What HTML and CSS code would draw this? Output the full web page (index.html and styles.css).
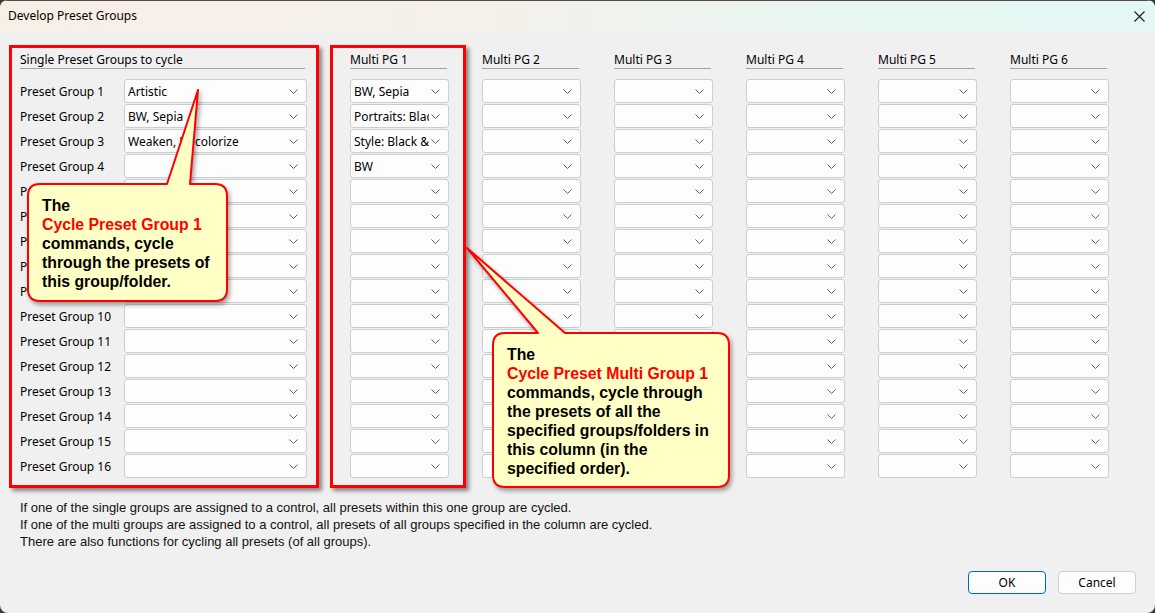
FILE: index.html
```html
<!DOCTYPE html>
<html>
<head>
<meta charset="utf-8">
<link rel="stylesheet" href="styles.css">
</head>
<body>
<div class="window">
  <div class="titlebar">
    <span class="title">Develop Preset Groups</span>
    <svg class="close" width="11" height="11" viewBox="0 0 11 11"><path d="M0.5 0.5 L10.5 10.5 M10.5 0.5 L0.5 10.5" stroke="#1a1a1a" stroke-width="1.1" fill="none"/></svg>
  </div>
  <div class="content">
    <div class="columns">
      <section class="single">
        <div class="hdr">Single Preset Groups to cycle</div>
        <div class="rows">
          <div class="row"><span class="lbl">Preset Group 1</span><div class="combo"><span class="val">Artistic</span><svg class="chev" width="9" height="5" viewBox="0 0 9 5"><path d="M0.5 0.5 L4.5 4.5 L8.5 0.5"/></svg></div></div>
          <div class="row"><span class="lbl">Preset Group 2</span><div class="combo"><span class="val">BW, Sepia</span><svg class="chev" width="9" height="5" viewBox="0 0 9 5"><path d="M0.5 0.5 L4.5 4.5 L8.5 0.5"/></svg></div></div>
          <div class="row"><span class="lbl">Preset Group 3</span><div class="combo"><span class="val">Weaken, Decolorize</span><svg class="chev" width="9" height="5" viewBox="0 0 9 5"><path d="M0.5 0.5 L4.5 4.5 L8.5 0.5"/></svg></div></div>
          <div class="row"><span class="lbl">Preset Group 4</span><div class="combo"><span class="val"></span><svg class="chev" width="9" height="5" viewBox="0 0 9 5"><path d="M0.5 0.5 L4.5 4.5 L8.5 0.5"/></svg></div></div>
          <div class="row"><span class="lbl">Preset Group 5</span><div class="combo"><span class="val"></span><svg class="chev" width="9" height="5" viewBox="0 0 9 5"><path d="M0.5 0.5 L4.5 4.5 L8.5 0.5"/></svg></div></div>
          <div class="row"><span class="lbl">Preset Group 6</span><div class="combo"><span class="val"></span><svg class="chev" width="9" height="5" viewBox="0 0 9 5"><path d="M0.5 0.5 L4.5 4.5 L8.5 0.5"/></svg></div></div>
          <div class="row"><span class="lbl">Preset Group 7</span><div class="combo"><span class="val"></span><svg class="chev" width="9" height="5" viewBox="0 0 9 5"><path d="M0.5 0.5 L4.5 4.5 L8.5 0.5"/></svg></div></div>
          <div class="row"><span class="lbl">Preset Group 8</span><div class="combo"><span class="val"></span><svg class="chev" width="9" height="5" viewBox="0 0 9 5"><path d="M0.5 0.5 L4.5 4.5 L8.5 0.5"/></svg></div></div>
          <div class="row"><span class="lbl">Preset Group 9</span><div class="combo"><span class="val"></span><svg class="chev" width="9" height="5" viewBox="0 0 9 5"><path d="M0.5 0.5 L4.5 4.5 L8.5 0.5"/></svg></div></div>
          <div class="row"><span class="lbl">Preset Group 10</span><div class="combo"><span class="val"></span><svg class="chev" width="9" height="5" viewBox="0 0 9 5"><path d="M0.5 0.5 L4.5 4.5 L8.5 0.5"/></svg></div></div>
          <div class="row"><span class="lbl">Preset Group 11</span><div class="combo"><span class="val"></span><svg class="chev" width="9" height="5" viewBox="0 0 9 5"><path d="M0.5 0.5 L4.5 4.5 L8.5 0.5"/></svg></div></div>
          <div class="row"><span class="lbl">Preset Group 12</span><div class="combo"><span class="val"></span><svg class="chev" width="9" height="5" viewBox="0 0 9 5"><path d="M0.5 0.5 L4.5 4.5 L8.5 0.5"/></svg></div></div>
          <div class="row"><span class="lbl">Preset Group 13</span><div class="combo"><span class="val"></span><svg class="chev" width="9" height="5" viewBox="0 0 9 5"><path d="M0.5 0.5 L4.5 4.5 L8.5 0.5"/></svg></div></div>
          <div class="row"><span class="lbl">Preset Group 14</span><div class="combo"><span class="val"></span><svg class="chev" width="9" height="5" viewBox="0 0 9 5"><path d="M0.5 0.5 L4.5 4.5 L8.5 0.5"/></svg></div></div>
          <div class="row"><span class="lbl">Preset Group 15</span><div class="combo"><span class="val"></span><svg class="chev" width="9" height="5" viewBox="0 0 9 5"><path d="M0.5 0.5 L4.5 4.5 L8.5 0.5"/></svg></div></div>
          <div class="row"><span class="lbl">Preset Group 16</span><div class="combo"><span class="val"></span><svg class="chev" width="9" height="5" viewBox="0 0 9 5"><path d="M0.5 0.5 L4.5 4.5 L8.5 0.5"/></svg></div></div>
        </div>
      </section>
      <section class="multi" id="m1"></section>
      <section class="multi" id="m2"></section>
      <section class="multi" id="m3"></section>
      <section class="multi" id="m4"></section>
      <section class="multi" id="m5"></section>
      <section class="multi" id="m6"></section>
    </div>
    <div class="notes">
      <p>If one of the single groups are assigned to a control, all presets within this one group are cycled.</p>
      <p>If one of the multi groups are assigned to a control, all presets of all groups specified in the column are cycled.</p>
      <p>There are also functions for cycling all presets (of all groups).</p>
    </div>
    <div class="buttons">
      <button class="btn default">OK</button>
      <button class="btn">Cancel</button>
    </div>
  </div>

  <div class="frame f1"></div>
  <div class="frame f2"></div>

  <div class="callout c1">
    <svg class="bubble" width="201" height="119" viewBox="0 0 201 119"><path d="M13 1 H140 L171 -93 L163 1 H188 Q200 1 200 13 V106 Q200 118 188 118 H13 Q1 118 1 106 V13 Q1 1 13 1 Z"/></svg>
    <div class="ctext">The<br><span class="red">Cycle Preset Group 1</span><br>commands, cycle<br>through the presets of<br>this group/folder.</div>
  </div>
  <div class="callout c2">
    <svg class="bubble" width="238" height="156" viewBox="0 0 238 156"><path d="M13 1 H46 L-25 -84 L73 1 H225 Q237 1 237 13 V143 Q237 155 225 155 H13 Q1 155 1 143 V13 Q1 1 13 1 Z"/></svg>
    <div class="ctext">The<br><span class="red">Cycle Preset Multi Group 1</span><br>commands, cycle through<br>the presets of all the<br>specified groups/folders in<br>this column (in the<br>specified order).</div>
  </div>
</div>
<script src="app.js"></script>
</body>
</html>
```
FILE: app.js
```js
(function () {
  var chev = '<svg class="chev" width="9" height="5" viewBox="0 0 9 5"><path d="M0.5 0.5 L4.5 4.5 L8.5 0.5"/></svg>';
  var vals = { m1: ['BW, Sepia', 'Portraits: Black &amp; White', 'Style: Black &amp; White', 'BW'] };
  for (var i = 1; i <= 6; i++) {
    var id = 'm' + i;
    var sec = document.getElementById(id);
    var html = '<div class="hdr">Multi PG ' + i + '</div><div class="rows">';
    for (var r = 0; r < 16; r++) {
      var v = (vals[id] && vals[id][r]) || '';
      html += '<div class="row"><div class="combo"><span class="val">' + v + '</span>' + chev + '</div></div>';
    }
    html += '</div>';
    sec.innerHTML = html;
  }
})();
```
FILE: styles.css
```css
html, body {
  margin: 0;
  padding: 0;
  background: #3c3c3c;
}
.window {
  position: relative;
  width: 1155px;
  height: 613px;
  background: #f0f0f0;
  border-radius: 8px;
  overflow: hidden;
  font-family: "Noto Sans", "Open Sans", sans-serif;
  font-size: 12px;
  color: #000;
}
.titlebar {
  height: 31px;
  display: flex;
  align-items: center;
  justify-content: space-between;
  padding: 0 9px 0 8px;
  background: linear-gradient(90deg, #f8efe6 0%, #f3f0ea 45%, #e6f6f2 75%, #e3f7f4 100%);
  border-top: 1px solid #5a4a40;
  box-sizing: border-box;
}
.title {
  font-size: 12px;
  line-height: 16px;
}
.close {
  display: block;
  margin-right: 1px;
}
.content {
  padding: 20px 0 0 20px;
}
.columns {
  display: flex;
  gap: 33px;
}
.single {
  width: 287px;
  margin-right: 10px;
}
.multi {
  width: 99px;
}
.hdr {
  line-height: 16px;
  padding-top: 1px;
  border-bottom: 1px solid #a0a0a0;
  width: calc(100% - 2px);
  margin-bottom: 10px;
  white-space: nowrap;
}
.rows {
  display: flex;
  flex-direction: column;
  gap: 1px;
}
.row {
  display: flex;
  align-items: center;
  height: 24px;
}
.lbl {
  width: 104px;
  flex: none;
  line-height: 16px;
  padding-top: 2px;
}
.combo {
  flex: 1;
  height: 24px;
  box-sizing: border-box;
  border: 1px solid #cdcdcd;
  border-radius: 3px;
  background: #fdfdfd;
  display: flex;
  align-items: center;
  padding: 0 8px 0 3px;
  overflow: hidden;
}
.val {
  flex: 1;
  white-space: nowrap;
  overflow: hidden;
  line-height: 16px;
  padding-top: 2px;
}
.chev {
  flex: none;
  margin-left: 2px;
}
.chev path {
  fill: none;
  stroke: #606060;
  stroke-width: 1;
}
.notes {
  margin-top: 21px;
  font-family: "Liberation Sans", Arial, sans-serif;
  font-size: 13px;
  line-height: 17px;
  color: #111;
}
.notes p {
  margin: 0;
}
.buttons {
  display: flex;
  justify-content: flex-end;
  gap: 12px;
  margin-top: 21px;
  padding-right: 19px;
}
.btn {
  width: 78px;
  height: 23px;
  box-sizing: border-box;
  border: 1px solid #d0d0d0;
  border-radius: 4px;
  background: #fdfdfd;
  font-family: "Noto Sans", "Open Sans", sans-serif;
  font-size: 12px;
  color: #000;
  padding: 0;
  line-height: 16px;
}
.btn.default {
  border-color: #0067c0;
}
.frame {
  position: absolute;
  top: 45px;
  height: 443px;
  box-sizing: border-box;
  border: 3px solid #ff0000;
  box-shadow: 3px 3px 4px rgba(0, 0, 0, 0.45);
  pointer-events: none;
}
.f1 {
  left: 9px;
  width: 310px;
}
.f2 {
  left: 330px;
  width: 136px;
}
.callout {
  position: absolute;
  box-sizing: border-box;
  padding: 13px 0 0 15px;
}
.c1 {
  left: 27px;
  top: 183px;
  width: 201px;
  height: 119px;
}
.c2 {
  left: 492px;
  top: 332px;
  width: 238px;
  height: 156px;
}
.bubble {
  position: absolute;
  left: 0;
  top: 0;
  overflow: visible;
  filter: drop-shadow(2px 3px 2px rgba(0, 0, 0, 0.35));
}
.bubble path {
  fill: #ffffc6;
  stroke: #ff0000;
  stroke-width: 2;
  stroke-linejoin: round;
}
.ctext {
  position: relative;
  font-family: "Liberation Sans", Arial, sans-serif;
  font-weight: bold;
  font-size: 15.8px;
  line-height: 19px;
  color: #000;
  white-space: nowrap;
}
.red {
  color: #ff0000;
}
```
